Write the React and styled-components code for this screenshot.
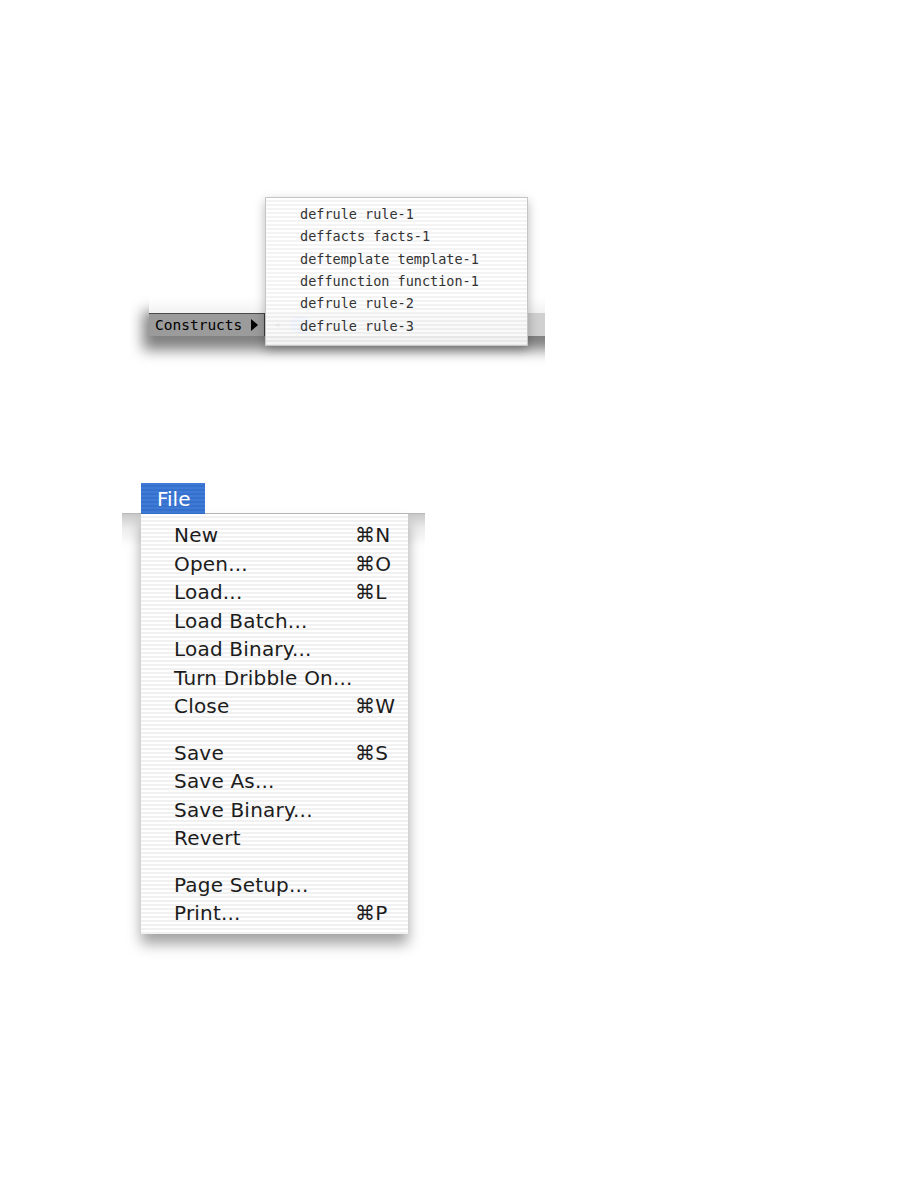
import React from 'react';
import styled, { createGlobalStyle } from 'styled-components';

const GlobalStyle = createGlobalStyle`
    html, body {
        margin: 0;
        padding: 0;
        background: #ffffff;
    }
`;

const pinstripe = (a, b) =>
    `repeating-linear-gradient(to bottom, ${a} 0px, ${a} 2px, ${b} 2px, ${b} 4px)`;

const Page = styled.div`
    width: 918px;
    min-height: 1188px;
    padding-top: 190px;
    display: flex;
    flex-direction: column;
    box-sizing: border-box;
`;

/* ---------- constructs popup ---------- */

const ConstructsFigure = styled.div`
    position: relative;
    margin-left: 130px;
    width: 415px;
    height: 182px;
    overflow: hidden;
`;

const Window = styled.div`
    margin-top: 107px;
    margin-left: 19px;
    width: 420px;
    display: flex;
    flex-direction: column;
    background: #fafafa;
    box-shadow: -6px 14px 14px rgba(0, 0, 0, 0.5);
`;

const WindowTop = styled.div`
    height: 16px;
    background: linear-gradient(to bottom, #ffffff, #f2f2f2);
`;

const StatusBar = styled.div`
    height: 23px;
    display: flex;
    align-items: center;
    background: #d0d0d0;
`;

const ConstructsButton = styled.div`
    width: 116px;
    height: 23px;
    box-sizing: border-box;
    display: flex;
    align-items: center;
    gap: 9px;
    padding-left: 6px;
    background: #9b9b9b;
    border-top: 1px solid #4a4a4a;
    border-right: 1px solid #3c3c3c;
    font-family: "DejaVu Sans Mono", "Liberation Mono", monospace;
    font-size: 14.5px;
    color: #000;
`;

const Triangle = styled.span`
    width: 0;
    height: 0;
    border-top: 6.5px solid transparent;
    border-bottom: 6.5px solid transparent;
    border-left: 7px solid #000;
`;

const BackArrow = styled.span`
    margin-left: 9px;
    font-family: "DejaVu Sans", sans-serif;
    font-size: 11px;
    color: #777;
`;

const FocusRing = styled.span`
    margin-left: 10px;
    width: 22px;
    height: 18px;
    border-radius: 50%;
    background: #8fb2ee;
`;

const PopupMenu = styled.div`
    position: absolute;
    left: 135px;
    top: 7px;
    width: 263px;
    height: 149px;
    box-sizing: border-box;
    padding: 5px 0 8px 34px;
    border: 1px solid #c6c6c6;
    background: ${pinstripe('rgba(255,255,255,0.9)', 'rgba(242,242,242,0.9)')};
    box-shadow: 0 4px 10px rgba(0, 0, 0, 0.28);
    display: flex;
    flex-direction: column;
`;

const PopupItem = styled.div`
    height: 22.6px;
    display: flex;
    align-items: center;
    font-family: "DejaVu Sans Mono", "Liberation Mono", monospace;
    font-size: 13.5px;
    color: #333;
    white-space: pre;
`;

/* ---------- file menu ---------- */

const FileFigure = styled.div`
    margin-top: 111px;
    margin-left: 122px;
    width: 303px;
    display: flex;
    flex-direction: column;
`;

const MenuBar = styled.div`
    height: 30px;
    padding-left: 19px;
    display: flex;
    border-bottom: 1px solid #b9b9b9;
    background: #ffffff;
`;

const MenuTitle = styled.div`
    width: 64px;
    height: 31px;
    box-sizing: border-box;
    padding-left: 16px;
    display: flex;
    align-items: center;
    background: ${pinstripe('#3f7bd6', '#3570cc')};
    color: #ffffff;
    font-family: "DejaVu Sans", "Liberation Sans", sans-serif;
    font-size: 20px;
`;

const MenuBody = styled.div`
    padding-left: 19px;
    background: linear-gradient(to bottom, #c9c9c9 0px, #ececec 14px, #ffffff 32px) no-repeat;
    background-size: 100% 34px;
`;

const MenuPanel = styled.div`
    width: 267px;
    box-sizing: border-box;
    padding: 6.75px 0 7px 33px;
    display: flex;
    flex-direction: column;
    background: ${pinstripe('#ffffff', '#f1f1f1')};
    box-shadow: 0 10px 13px rgba(0, 0, 0, 0.36);
`;

const MenuItem = styled.div`
    height: 28.5px;
    display: flex;
    align-items: center;
    font-family: "DejaVu Sans", "Liberation Sans", sans-serif;
    font-size: 20px;
    letter-spacing: 0.2px;
    color: #1c1c1c;
`;

const Label = styled.span`
    width: 181px;
    flex: 0 0 181px;
    white-space: nowrap;
`;

const Shortcut = styled.span`
    white-space: nowrap;
`;

const Separator = styled.div`
    height: 18px;
`;

const constructs = [
    'defrule rule-1',
    'deffacts facts-1',
    'deftemplate template-1',
    'deffunction function-1',
    'defrule rule-2',
    'defrule rule-3',
];

const fileItems = [
    ['New', '⌘N'],
    ['Open...', '⌘O'],
    ['Load...', '⌘L'],
    ['Load Batch...'],
    ['Load Binary...'],
    ['Turn Dribble On...'],
    ['Close', '⌘W'],
    null,
    ['Save', '⌘S'],
    ['Save As...'],
    ['Save Binary...'],
    ['Revert'],
    null,
    ['Page Setup...'],
    ['Print...', '⌘P'],
];

const App = () => {
    return (
        <Page>
            <GlobalStyle />
            <ConstructsFigure>
                <Window>
                    <WindowTop />
                    <StatusBar>
                        <ConstructsButton>
                            <span>Constructs</span>
                            <Triangle />
                        </ConstructsButton>
                        <BackArrow>◂</BackArrow>
                        <FocusRing />
                    </StatusBar>
                </Window>
                <PopupMenu>
                    {constructs.map((c) => (
                        <PopupItem key={c}>{c}</PopupItem>
                    ))}
                </PopupMenu>
            </ConstructsFigure>

            <FileFigure>
                <MenuBar>
                    <MenuTitle>File</MenuTitle>
                </MenuBar>
                <MenuBody>
                    <MenuPanel>
                        {fileItems.map((item, i) =>
                            item ? (
                                <MenuItem key={item[0]}>
                                    <Label>{item[0]}</Label>
                                    {item[1] && <Shortcut>{item[1]}</Shortcut>}
                                </MenuItem>
                            ) : (
                                <Separator key={'sep' + i} />
                            )
                        )}
                    </MenuPanel>
                </MenuBody>
            </FileFigure>
        </Page>
    );
};

export default App;
